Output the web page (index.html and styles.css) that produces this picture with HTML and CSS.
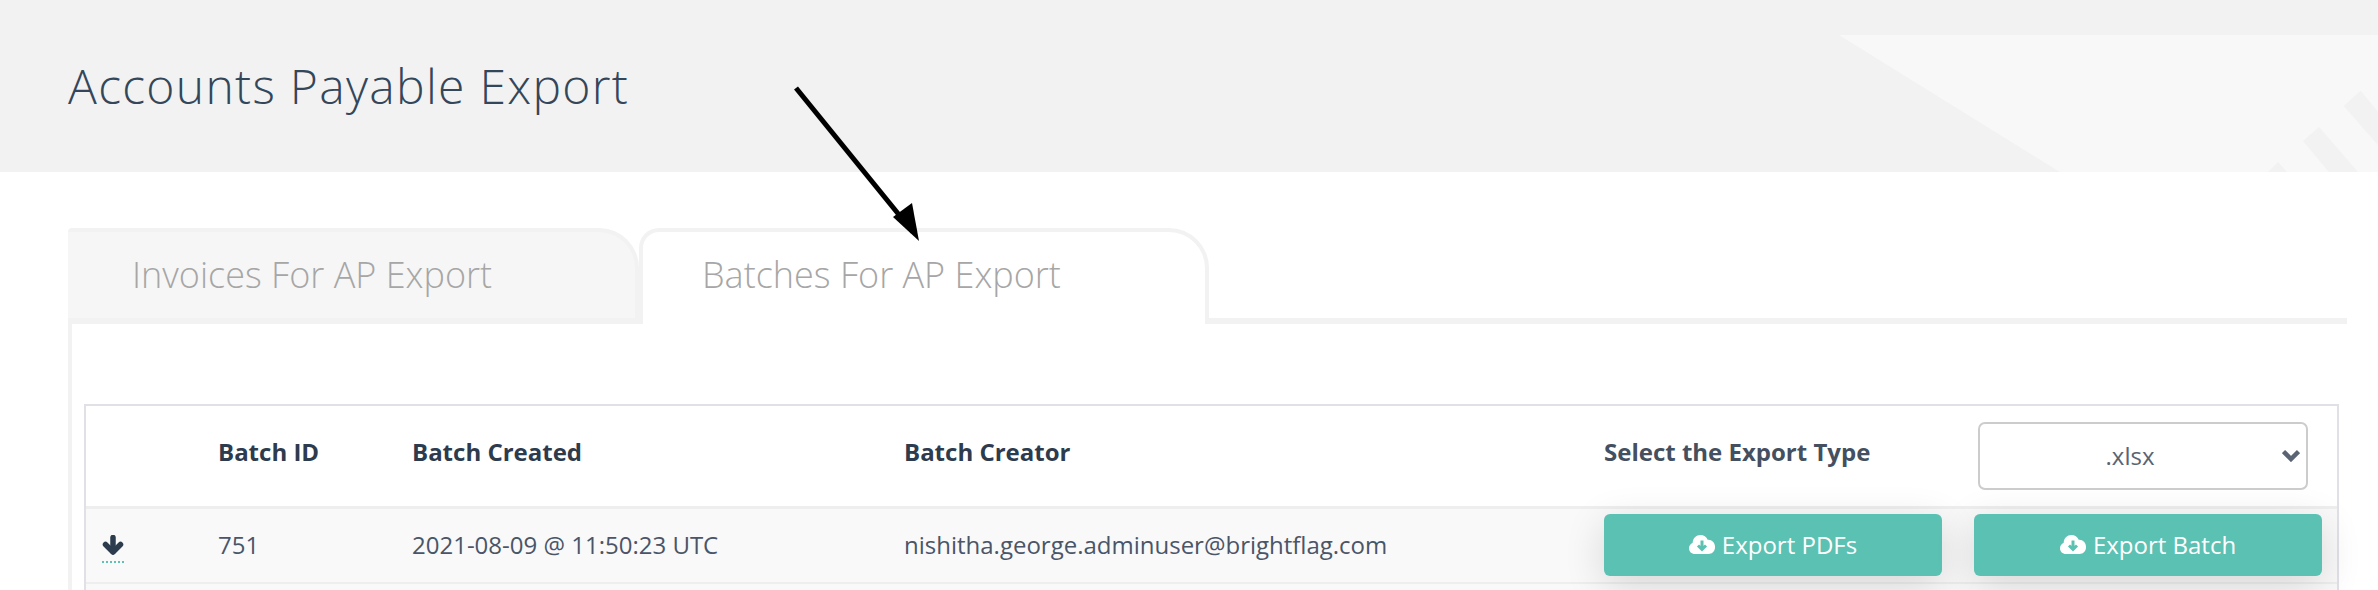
FILE: index.html
```html
<!DOCTYPE html>
<html lang="en">
<head>
<meta charset="utf-8">
<title>Accounts Payable Export</title>
<link rel="stylesheet" href="styles.css">
</head>
<body>
<header class="page-header">
  <h1 class="page-title">Accounts Payable Export</h1>
  <svg class="header-art" viewBox="0 0 539 137" aria-hidden="true">
    <polygon class="art-light" points="0,0 539,0 539,137 221,137"/>
    <polygon class="art-dark" points="521.6,55.7 539,76.7 539,110 504.8,71"/>
    <polygon class="art-dark" points="480,92 519,137 490,137 464,106"/>
    <polygon class="art-dark" points="439,127 448,137 429,137"/>
  </svg>
</header>
<main class="content">
  <nav class="tabs">
    <div class="tab tab-inactive">Invoices For AP Export</div>
    <div class="tab tab-active">Batches For AP Export</div>
  </nav>
  <section class="panel">
    <div class="table">
      <div class="row row-head">
        <div class="cell"></div>
        <div class="cell th">Batch ID</div>
        <div class="cell th">Batch Created</div>
        <div class="cell th">Batch Creator</div>
        <div class="cell th th-select">Select the Export Type</div>
        <div class="cell select-cell">
          <div class="select-wrap">
            <select class="select"><option>.xlsx</option></select>
            <svg class="chevron" viewBox="0 0 18 13" aria-hidden="true"><path d="M1.500 2.500 9 10l7.500-7.500"/></svg>
          </div>
        </div>
      </div>
      <div class="row row-body">
        <div class="cell">
          <span class="expander">
            <svg class="arrow-down" viewBox="0 0 22 20" aria-hidden="true"><path d="M11 2.500v14"/><path class="arrow-head" d="M3.500 9.500 11 17l7.500-7.500"/></svg>
          </span>
        </div>
        <div class="cell">751</div>
        <div class="cell">2021-08-09 @ 11:50:23 UTC</div>
        <div class="cell">nishitha.george.adminuser@brightflag.com</div>
        <div class="cell">
          <button class="btn btn-pdf">
            <svg class="cloud" viewBox="0 0 26 19" aria-hidden="true"><path class="cloud-body" d="M6 19C2.600 19 0 16.500 0 13.200c0-2.500 1.500-4.600 3.700-5.500C3.700 3.400 7.200 0 11.500 0c3.200 0 6 1.900 7.200 4.700 3.900-.4 7.300 2.700 7.300 6.800V12.500c0 3.600-2.900 6.500-6.500 6.500z"/><path class="cloud-arrow" d="M13 5.500v8M9 10.500l4 4 4-4"/></svg>
            Export PDFs
          </button>
        </div>
        <div class="cell">
          <button class="btn btn-batch">
            <svg class="cloud" viewBox="0 0 26 19" aria-hidden="true"><path class="cloud-body" d="M6 19C2.600 19 0 16.500 0 13.200c0-2.500 1.500-4.600 3.700-5.500C3.700 3.400 7.200 0 11.500 0c3.200 0 6 1.900 7.200 4.700 3.900-.4 7.300 2.700 7.300 6.800V12.500c0 3.600-2.900 6.500-6.500 6.500z"/><path class="cloud-arrow" d="M13 5.500v8M9 10.500l4 4 4-4"/></svg>
            Export Batch
          </button>
        </div>
      </div>
      <div class="row row-next"></div>
    </div>
  </section>
</main>
<svg class="annotation" viewBox="0 0 140 170" aria-hidden="true">
  <path class="annotation-line" d="M2 2 119 146"/>
  <polygon class="annotation-head" points="125,155 99,131 118,117"/>
</svg>
</body>
</html>
```
FILE: styles.css
```css
* { box-sizing: border-box; }
html, body { margin: 0; padding: 0; }
body {
  width: 2378px;
  height: 590px;
  overflow: hidden;
  background: #fff;
  font-family: "Open Sans", "Noto Sans", sans-serif;
  color: #4a5568;
  position: relative;
}
.page-header {
  height: 172px;
  background: #f2f2f2;
  padding-left: 68px;
  display: flex;
  align-items: center;
  position: relative;
  overflow: hidden;
}
.page-title {
  margin: 0;
  font-size: 48px;
  font-weight: 300;
  letter-spacing: 1.3px;
  color: #34465a;
  line-height: 1;
  position: relative;
  z-index: 1;
}
.header-art {
  position: absolute;
  left: 1839px;
  top: 35px;
  width: 539px;
  height: 137px;
}
.art-light { fill: #f8f8f8; }
.art-dark { fill: #f2f2f2; }
.content { padding: 56px 31px 0 68px; }
.tabs {
  display: flex;
  height: 96px;
  border-bottom: 6px solid #f2f2f2;
}
.tab {
  font-size: 36px;
  font-weight: 300;
  color: #a6a6a6;
  height: 96px;
  display: flex;
  align-items: center;
  padding-bottom: 8px;
  border: 4px solid #f2f2f2;
  border-bottom: none;
  border-top-right-radius: 40px;
  border-top-left-radius: 4px;
}
.tab-inactive {
  width: 571px;
  padding-left: 64px;
  padding-bottom: 2px;
  background: #f6f6f6;
  border-left: none;
  height: 90px;
}
.tab-active {
  width: 570px;
  padding-left: 59px;
  background: #fff;
  border-top-left-radius: 20px;
  position: relative;
  z-index: 1;
}
.panel {
  height: 266px;
  border-left: 4px solid #f2f2f2;
  padding: 80px 8px 0 12px;
}
.table {
  border: 2px solid #e0e0e6;
  border-bottom: none;
  height: 190px;
}
.row {
  display: grid;
  grid-template-columns: 132px 194px 492px 700px 370px 363px;
  align-items: center;
  font-size: 24px;
}
.row-head {
  height: 103px;
  background: #fff;
  border-bottom: 3px solid #eeeeee;
}
.row-body {
  height: 75px;
  padding-bottom: 2px;
  background: #f9f9f9;
  border-bottom: 2px solid #eeeeee;
}
.row-next {
  height: 20px;
  background: #f9f9f9;
}
.cell { min-width: 0; white-space: nowrap; }
.th {
  font-weight: 700;
  color: #2d3b4e;
  margin-top: -10px;
}
.th-select { color: #444f60; }
.select-wrap {
  position: relative;
  width: 330px;
  height: 68px;
  margin-left: 4px;
  margin-top: -1px;
}
.select {
  appearance: none;
  -webkit-appearance: none;
  width: 100%;
  height: 100%;
  border: 2px solid #cccccc;
  border-radius: 7px;
  background: #fff;
  font: 400 24px "Open Sans", sans-serif;
  color: #5a6472;
  text-align: center;
  text-align-last: center;
  padding-right: 26px;
}
.chevron {
  position: absolute;
  right: 8px;
  top: 27px;
  width: 18px;
  height: 13px;
  pointer-events: none;
}
.chevron path { fill: none; stroke: #5a6472; stroke-width: 4.500; }
.expander {
  display: block;
  margin-left: 16px;
  margin-top: 1px;
  width: 22px;
  height: 35px;
  padding-top: 7px;
  border-bottom: 2px dotted #5cc2b3;
}
.arrow-down { display: block; width: 22px; height: 20px; }
.arrow-down path {
  fill: none;
  stroke: #2d3b4e;
  stroke-width: 5.500;
  stroke-linecap: round;
  stroke-linejoin: round;
}
.btn {
  display: flex;
  align-items: center;
  justify-content: center;
  gap: 7px;
  height: 62px;
  border: none;
  border-radius: 6px;
  background: #5bc1b3;
  color: #fff;
  font: 400 24px "Open Sans", sans-serif;
  box-shadow: 0 10px 40px rgba(0, 0, 0, .14);
}
.btn-pdf { width: 338px; }
.btn-batch { width: 348px; }
.cloud { width: 26px; height: 19px; flex: none; }
.cloud-body { fill: #fff; }
.cloud-arrow { fill: none; stroke: #5bc1b3; stroke-width: 3; }
.annotation {
  position: absolute;
  left: 794px;
  top: 86px;
  width: 140px;
  height: 170px;
  z-index: 5;
}
.annotation-line { fill: none; stroke: #000; stroke-width: 5; }
.annotation-head { fill: #000; }
```
